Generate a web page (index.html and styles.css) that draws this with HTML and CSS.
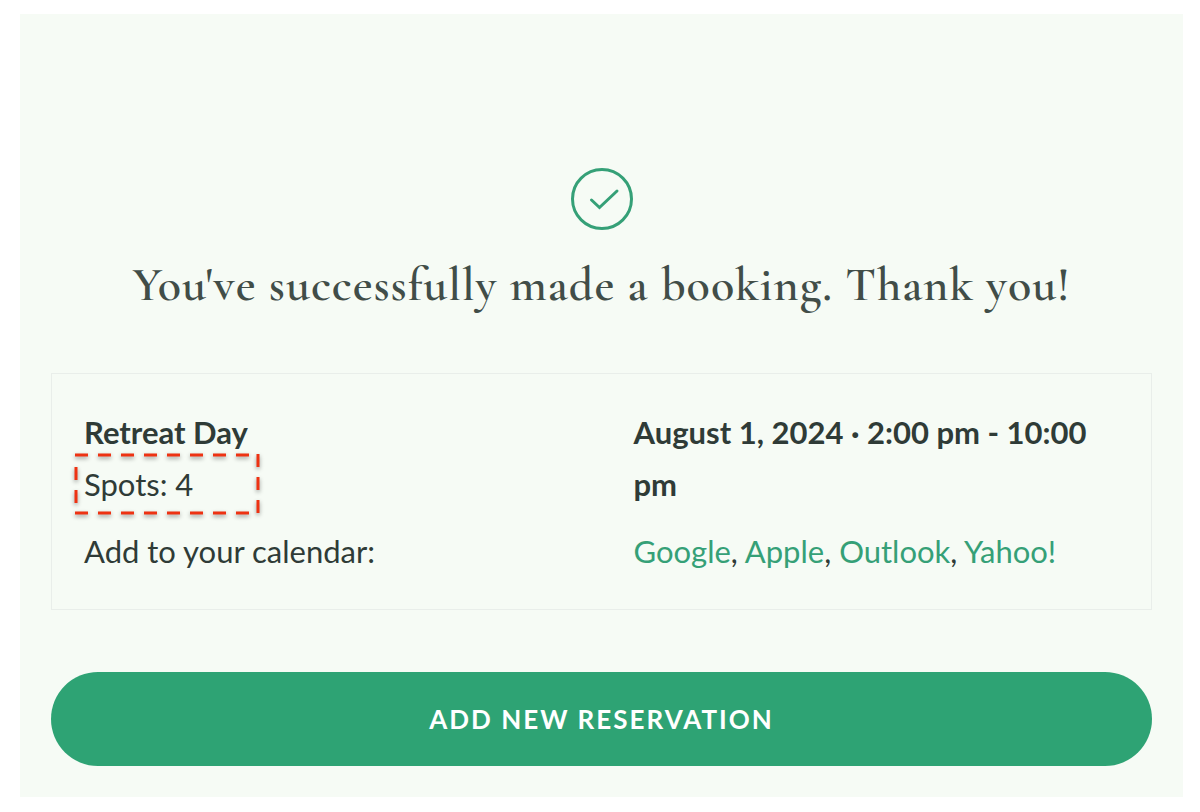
FILE: index.html
```html
<!DOCTYPE html>
<html lang="en">
<head>
<meta charset="utf-8">
<meta name="viewport" content="width=device-width, initial-scale=1">
<title>Booking confirmed</title>
<link rel="stylesheet" href="styles.css">
</head>
<body>
<main class="confirmation">
  <svg class="check" viewBox="0 0 64 64" aria-hidden="true"><circle cx="32" cy="32" r="29.5"/><path d="M21.5 33L29.5 40.5L47 24"/></svg>
  <h1 class="title">You've successfully made a booking. Thank you!</h1>
  <section class="details">
    <div class="cell">
      <strong class="event-name">Retreat Day</strong>
      <div class="spots">Spots: 4
        <svg class="highlight" viewBox="0 0 188 66" aria-hidden="true"><path d="M1 3H176M184 2V63M1 61H176M2 15V52"/></svg>
      </div>
    </div>
    <strong class="cell">August 1, 2024 · 2:00 pm - 10:00 pm</strong>
    <div class="cell">Add to your calendar:</div>
    <div class="cell"><a href="#">Google</a>, <a href="#">Apple</a>, <a href="#">Outlook</a>, <a href="#">Yahoo!</a></div>
  </section>
  <button class="new-reservation" type="button">ADD NEW RESERVATION</button>
</main>
</body>
</html>
```
FILE: styles.css
```css
* { box-sizing: border-box; }
body {
  margin: 0;
  padding: 14px 17px 15px 20px;
  background: #fff;
  color: #2f3b37;
  font-family: Lato, sans-serif;
  font-size: 31px;
  line-height: 52px;
}
.confirmation {
  display: flex;
  flex-direction: column;
  align-items: center;
  padding: 153px 31px 31px;
  background: #f6fbf5;
}
.check {
  width: 64px;
  height: 64px;
  fill: none;
  stroke: #35a077;
  stroke-width: 3;
  stroke-linecap: round;
}
.title {
  margin: 24px 0 58px;
  color: #414d48;
  font-family: "Cormorant Garamond", "Liberation Serif", serif;
  font-size: 48px;
  font-weight: 600;
  line-height: 60px;
  letter-spacing: 1px;
  text-align: center;
}
.details {
  display: grid;
  grid-template-columns: 1fr 1fr;
  row-gap: 15px;
  width: 100%;
  padding: 32px 0;
  border: 1px solid #e9eeea;
}
.cell { padding: 0 32px; }
.event-name { display: block; }
.spots { position: relative; }
.highlight {
  position: absolute;
  left: -10px;
  top: -6px;
  width: 188px;
  height: 66px;
  fill: none;
  stroke: #ee3212;
  stroke-width: 3;
  stroke-dasharray: 13 10;
  filter: drop-shadow(0 2px 2px #0006);
}
a { color: #35a077; text-decoration: none; }
.new-reservation {
  width: 100%;
  margin-top: 62px;
  padding: 21px 32px;
  border: 0;
  border-radius: 48px;
  background: #2ea374;
  color: #fff;
  font: 700 26px/52px Lato, sans-serif;
  letter-spacing: 2px;
}
```
